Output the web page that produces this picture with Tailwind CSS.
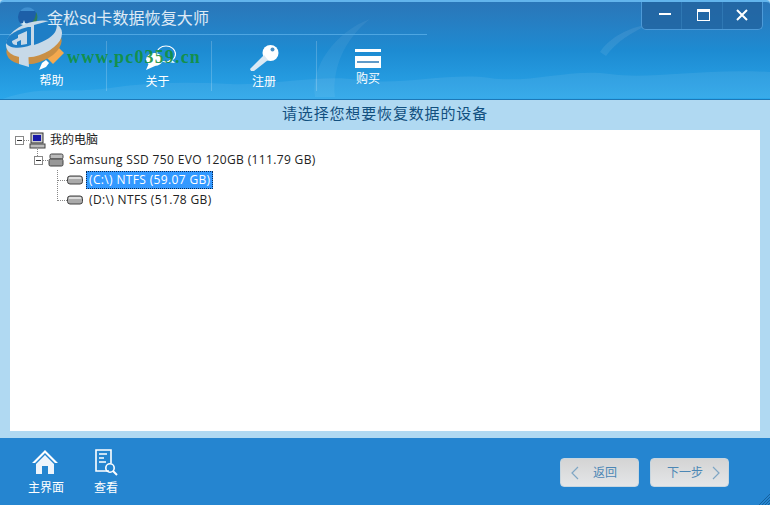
<!DOCTYPE html>
<html lang="en">
<head>
    <meta charset="UTF-8">
    <title>金松sd卡数据恢复大师</title>
    <script src="https://cdn.jsdelivr.net/npm/@tailwindcss/browser@4"></script>
</head>
<body class="w-[770px] h-[505px] overflow-hidden bg-[#b0d9f2] font-['Liberation_Sans','Noto_Sans_CJK_SC',sans-serif]">
    <div class="relative w-[770px] h-[505px] flex flex-col">
        <!-- Header -->
        <div class="relative h-[100px] shrink-0 overflow-hidden bg-gradient-to-b from-[#2a76b8] via-[#1d8bd2] to-[#2aa6ea] border-t-2 border-t-[#62b4ec] border-b border-b-[#1c78b8] rounded-t-[4px]">
            <svg class="absolute left-0 top-0 w-[770px] h-[98px]" viewBox="0 0 770 98" fill="none">
                <path d="M315 95c-5-30 20-65 55-78-25 20-38 48-35 78z" fill="#fff" fill-opacity=".06"/>
                <path d="M0 98c40-16 70-6 110-12s80-6 120-4 90-10 130-4 90-8 130-2 80-10 120-4 90-6 160-2v26z" fill="#fff" fill-opacity=".07"/>
                <path d="M600 50c10-15 30-25 50-28-18 8-34 18-44 32z" fill="#fff" fill-opacity=".08"/>
            </svg>
            <div class="relative z-10 h-[32px] pl-[47px] pt-[5px] text-[16px] leading-[24px] text-white/85 tracking-[0.1px]">金松sd卡数据恢复大师</div>
            <div class="relative w-[427px] h-px bg-[#4ea6e2]"></div>
            <div class="relative flex h-[50px] mt-[6px] text-white text-[12px] leading-[16px]">
                <div class="w-[107px] border-r border-white/20 flex flex-col items-center">
                    <svg class="w-[28px] h-[28px] mt-[3px] ml-[-2px]" viewBox="0 0 28 28"><path d="M1 26l3-7 4-3 3 3-3 4z" fill="#fff"/><path d="M9 14L20 3l6 6-11 11z" fill="#f5a94e"/></svg>
                    <span class="mt-[1px] ml-[-3px]">帮助</span>
                </div>
                <div class="w-[105px] border-r border-white/20 flex flex-col items-center">
                    <svg class="w-[32px] h-[28px] mt-[3px] ml-[1px]" viewBox="0 0 32 28"><ellipse cx="22" cy="10" rx="9.5" ry="8" fill="none" stroke="#fff" stroke-width="1.2"/><ellipse cx="10.5" cy="15.5" rx="8.5" ry="6.5" fill="#fff"/><path d="M5 19l-3 7 9-4z" fill="#fff"/><path d="M27 15l4 4-8-1z" fill="#fff"/></svg>
                    <span class="mt-[2px] ml-[-3px]">关于</span>
                </div>
                <div class="w-[105px] border-r border-white/20 flex flex-col items-center">
                    <svg class="w-[30px] h-[30px] mt-[2px]" viewBox="0 0 30 30"><circle cx="21.5" cy="10" r="8" fill="#fff"/><circle cx="23.5" cy="6.5" r="2" fill="#4a8fc4"/><path d="M15 12l4 5L5 28l-3 0-1-2z" fill="#dbe9f4"/></svg>
                    <span class="mt-[1px]">注册</span>
                </div>
                <div class="w-[104px] flex flex-col items-center">
                    <div class="w-[26px] mt-[8px] ml-[-2px]">
                        <div class="h-[3px] bg-white"></div>
                        <div class="h-[12px] mt-[4px] bg-white flex items-center justify-center"><span class="w-[22px] h-[2px] bg-[#1d6fb0]/70"></span></div>
                    </div>
                    <span class="mt-[3px] ml-[-2px]">购买</span>
                </div>
            </div>
            <!-- Window buttons -->
            <div class="absolute top-[-2px] right-[7px] w-[122px] h-[30px] flex bg-[#22639f]/80 border border-t-0 border-[#4d9ad8] rounded-b-[5px] text-white">
                <div class="flex-1 border-r border-[#2f78b4] flex items-center justify-center">
                    <div class="w-[12px] h-[2px] bg-white mt-[-2px] ml-[6px]"></div>
                </div>
                <div class="flex-1 border-r border-[#2f78b4] flex items-center justify-center">
                    <div class="w-[13px] h-[12px] border border-white border-t-[3px] mt-[1px] ml-[3px]"></div>
                </div>
                <div class="flex-1 flex items-center justify-center">
                    <svg class="w-[12px] h-[12px]" viewBox="0 0 12 12"><path d="M1 1l10 10M11 1L1 11" stroke="#fff" stroke-width="2"/></svg>
                </div>
            </div>
        </div>

        <!-- Prompt -->
        <div class="h-[30px] shrink-0 text-center text-[15px] leading-[28px] tracking-[0.85px] text-[#12507f]">请选择您想要恢复数据的设备</div>

        <!-- Device tree -->
        <div class="relative h-[301px] shrink-0 mx-[10px] bg-white text-[12px] leading-[16px] text-[#222] font-['Open_Sans','Noto_Sans_CJK_SC',sans-serif]">
            <div class="absolute left-[27px] top-[17px] h-[9px] border-l border-dotted border-[#888]"></div>
            <div class="absolute left-[47px] top-[40px] h-[31px] border-l border-dotted border-[#888]"></div>
            <div class="flex items-center h-[20px] pl-[5px]">
                <span class="w-[9px] h-[9px] border border-[#888] flex items-center justify-center"><span class="w-[5px] h-px bg-[#333]"></span></span>
                <span class="w-[5px] border-t border-dotted border-[#888]"></span>
                <svg class="w-[17px] h-[17px]" viewBox="0 0 17 17"><rect x="2" y="1" width="12" height="10" fill="#ccc" stroke="#333"/><rect x="4" y="3" width="8" height="6" fill="#1a1aa8"/><rect x="1" y="12" width="15" height="4" fill="#bbb" stroke="#444"/></svg>
                <span class="ml-[4px]">我的电脑</span>
            </div>
            <div class="flex items-center h-[20px] pl-[24px]">
                <span class="w-[9px] h-[9px] border border-[#888] flex items-center justify-center"><span class="w-[5px] h-px bg-[#333]"></span></span>
                <span class="w-[5px] border-t border-dotted border-[#888]"></span>
                <svg class="w-[16px] h-[14px]" viewBox="0 0 16 14"><rect x="2" y="1" width="13" height="5" rx="1.5" fill="#bbb" stroke="#444"/><rect x="1" y="6" width="14" height="7" rx="1.5" fill="#999" stroke="#444"/></svg>
                <span class="ml-[5px] tracking-[0.35px]">Samsung SSD 750 EVO 120GB (111.79 GB)</span>
            </div>
            <div class="flex items-center h-[20px] pl-[47px]">
                <span class="w-[10px] border-t border-dotted border-[#888]"></span>
                <svg class="w-[16px] h-[10px]" viewBox="0 0 16 10"><rect x=".5" y="1" width="15" height="8" rx="2.5" fill="#aaa" stroke="#444"/><rect x="2" y="2" width="12" height="2" fill="#ddd"/></svg>
                <span class="ml-[3px] h-[18px] px-[2px] bg-[#3399ff] border border-dotted border-[#0a2a55] text-white tracking-[0.35px]">(C:\) NTFS (59.07 GB)</span>
            </div>
            <div class="flex items-center h-[20px] pl-[47px]">
                <span class="w-[10px] border-t border-dotted border-[#888]"></span>
                <svg class="w-[16px] h-[10px]" viewBox="0 0 16 10"><rect x=".5" y="1" width="15" height="8" rx="2.5" fill="#aaa" stroke="#444"/><rect x="2" y="2" width="12" height="2" fill="#ddd"/></svg>
                <span class="ml-[3px] px-[3px] tracking-[0.35px]">(D:\) NTFS (51.78 GB)</span>
            </div>
        </div>
        <div class="h-[7px] shrink-0"></div>

        <!-- Footer -->
        <div class="relative flex-1 bg-[#2585d0] flex justify-between text-white text-[12px] leading-[16px]">
            <div class="flex pl-[28px] pt-[11px]">
                <div class="w-[36px] flex flex-col items-center">
                    <svg class="w-[28px] h-[26px] ml-[-2px]" viewBox="0 0 28 26"><path d="M14 1L1 14h3l10-10 10 10h3z" fill="#fff"/><path d="M5 15l9-9 9 9v10h-6v-8h-6v8H5z" fill="#eef4fb"/></svg>
                    <span class="mt-[5px]">主界面</span>
                </div>
                <div class="w-[36px] ml-[24px] flex flex-col items-center">
                    <svg class="w-[26px] h-[29px] mt-[-1px]" viewBox="0 0 26 29"><path d="M16 23H3V2h15v13" fill="none" stroke="#fff" stroke-width="1.6"/><path d="M6 6h8M6 10h5M6 14h7" stroke="#fff" stroke-width="1.5"/><circle cx="17" cy="20" r="4.2" fill="none" stroke="#fff" stroke-width="1.6"/><path d="M20 23l4 4" stroke="#fff" stroke-width="2"/></svg>
                    <span class="mt-[3px]">查看</span>
                </div>
            </div>
            <div class="flex gap-[11px] pr-[41px] pt-[20px] text-[#4c87b5]">
                <div class="w-[79px] h-[29px] rounded-[4px] border border-[#c7d6e0] bg-gradient-to-b from-[#d4d4d4] to-[#e4e6e8] flex items-center pl-[9px]">
                    <svg class="w-[10px] h-[14px]" viewBox="0 0 10 14"><path d="M8 1L2 7l6 6" fill="none" stroke="#7fa6c4" stroke-width="1.2"/></svg>
                    <span class="ml-[13px]">返回</span>
                </div>
                <div class="w-[79px] h-[29px] rounded-[4px] border border-[#c7d6e0] bg-gradient-to-b from-[#d4d4d4] to-[#e4e6e8] flex items-center pl-[16px]">
                    <span>下一步</span>
                    <svg class="w-[10px] h-[14px] ml-[8px]" viewBox="0 0 10 14"><path d="M2 1l6 6-6 6" fill="none" stroke="#7fa6c4" stroke-width="1.2"/></svg>
                </div>
            </div>
            <svg class="absolute right-0 bottom-0 w-[11px] h-[11px]" viewBox="0 0 11 11"><path d="M0 11L11 0M3 11l8-8M6 11l5-5M9 11l2-2" stroke="#16619f" stroke-width="1"/></svg>
        </div>

        <!-- Watermark logo over the title bar -->
        <svg class="absolute left-0 top-0 w-[70px] h-[72px]" viewBox="0 0 70 72">
            <circle cx="27.5" cy="17" r="9.5" fill="#1d5fa8"/>
            <path d="M20 11a9.5 9.5 0 0 1 15 0z" fill="#3f8fd0"/>
            <path d="M36 12a9.5 9.5 0 0 1-5 14l-4-1c5-1 9-6 9-13z" fill="#2d7d5a"/>
            <path d="M20 24l3-1 1-3 1 3 3 1-3 1-1 3-1-3z" fill="#d6ecf7"/>
            <ellipse cx="34" cy="46" rx="28.5" ry="17" transform="rotate(-18 34 46)" fill="#c98f45"/>
            <path d="M19 50h9l1 17-10-3z" fill="#c7d9e8"/>
            <ellipse cx="34" cy="39" rx="29" ry="17" transform="rotate(-18 34 39)" fill="#c7d9e8"/>
            <path d="M6 43c0-6 7-12 22-16l3 0 0 18c-10 4-21 4-25-2z" fill="#1e7ec6"/>
            <path d="M34 25l15-4c8-1 9 4 7 9-2 6-10 11-22 15z" fill="#1e7ec6"/>
            <path d="M12 41l6-3 0-3 9-4 0 13-6 1 0-5-4 2 0 3c-3 0-5-1-5-4z" fill="#c7d9e8"/>
        </svg>
        <div class="absolute left-[67px] top-[45px] font-['Liberation_Serif',serif] font-bold text-[18px] leading-[24px] tracking-[1.15px] text-[#12903a]/90 whitespace-nowrap">www.pc0359.cn</div>
    </div>
</body>
</html>
